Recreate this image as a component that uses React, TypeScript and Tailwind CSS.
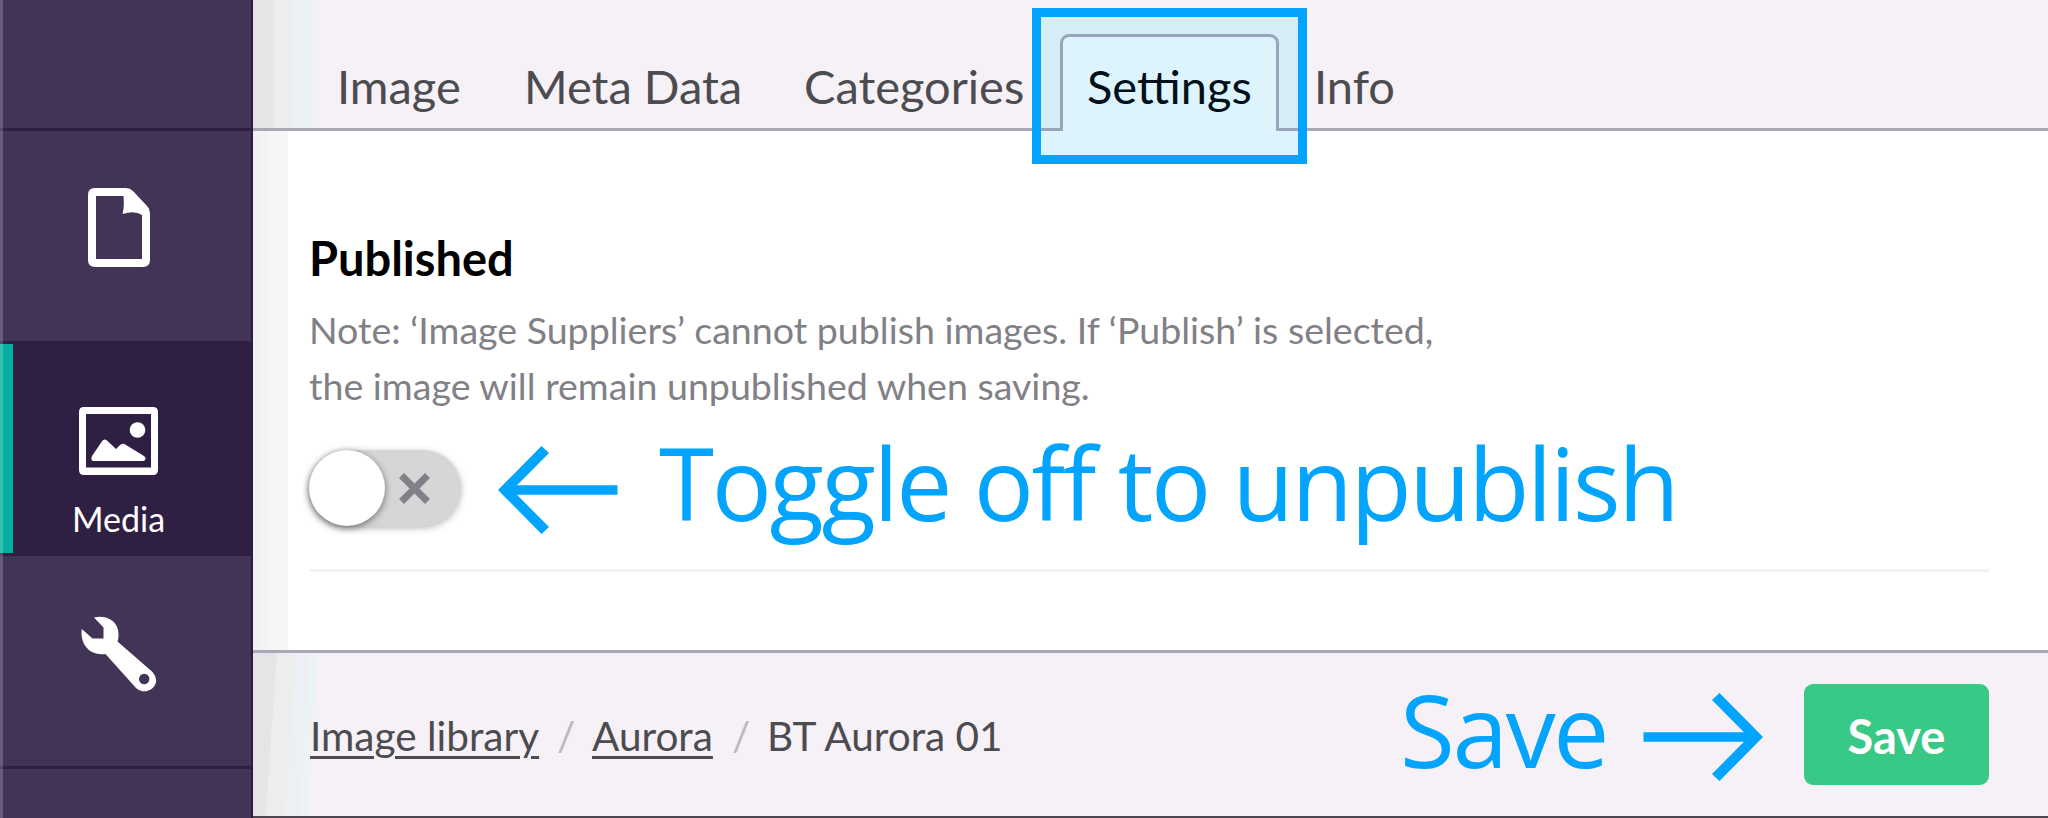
import React from "react";

function FileIcon() {
  return (
    <svg width="62" height="79" viewBox="0 0 62 79" fill="#fff" fillRule="evenodd">
      <path d="M7 0H38Q42 0 45 3L59 18Q62 21 62 25V72Q62 79 55 79H7Q0 79 0 72V7Q0 0 7 0ZM8 8V71H54V27Q47 22 34.500 26Q36.500 20 35.500 8Z" />
    </svg>
  );
}

function PictureIcon() {
  return (
    <svg width="79" height="68" viewBox="0 0 79 68" fill="#fff" fillRule="evenodd">
      <path d="M5 0H74Q79 0 79 5V63Q79 68 74 68H5Q0 68 0 63V5Q0 0 5 0ZM7 7V60.500H72V7Z" />
      <circle cx="58.500" cy="23" r="7.800" />
      <path d="M15 54Q11 54 13 49L22.500 35Q25.500 30.500 29 34.500L37 42L40.500 38.500Q43.500 35.500 47 38L65 49Q67 50.500 66.500 52Q66 54 64 54Z" />
    </svg>
  );
}

function WrenchIcon() {
  return (
    <svg width="76" height="76" viewBox="0 0 76 76" fill="#fff" fillRule="evenodd">
      <path d="M13 1.500C24 -1.500 38 4 37.500 19Q37.500 23 36.500 25.500L71.500 56Q76 61 75 66C73.500 74 63 79 55 72L24.500 38C9 40.500 -1.500 28 0.800 13L11.500 22.500H22.500V11.500ZM63.200 57.800A5.200 5.200 0 1 0 63.200 68.200A5.200 5.200 0 1 0 63.200 57.800Z" />
    </svg>
  );
}

function Arrow({ flip = false }: { flip?: boolean }) {
  return (
    <svg
      width="120"
      height="88"
      viewBox="0 0 120 88"
      fill="#02a4fd"
      className={flip ? "-scale-x-100" : ""}
    >
      <path d="M0 44L43.500 0L51 7L19 39.200H119.500V48.800H19L51 81L43.500 88Z" />
    </svg>
  );
}

function Sidebar() {
  return (
    <nav className="relative flex w-[253px] shrink-0 flex-col border-r-2 border-[#2c1b42] bg-[#413457]">
      <div className="h-[131px] border-b-[3px] border-[#2f1f43]" />
      <div className="flex h-[210px] justify-center pt-[57px] pr-[13px]">
        <FileIcon />
      </div>
      <div className="flex h-[215px] border-y-[3px] border-[#2f1f43] bg-[#2f1f43]">
        <div className="w-[13px] bg-[#06afa1]" />
        <div className="flex w-[211px] flex-col items-center pt-[63px]">
          <PictureIcon />
          <span className="mt-[24px] text-[34px] leading-[40px] text-white">Media</span>
        </div>
      </div>
      <div className="flex h-[213px] justify-center border-b-[3px] border-[#2f1f43] pt-[60px] pr-[13px]">
        <WrenchIcon />
      </div>
      <div className="absolute inset-y-0 left-0 w-[3px] bg-white/20" />
    </nav>
  );
}

function Tabs() {
  return (
    <header className="flex h-[131px] shrink-0 border-b-[3px] border-[#aaa7b7] bg-[#f5f1f6] bg-[linear-gradient(90deg,#e5e5e8_0_21px,#ededed_21px_39px,#eceff3_39px_52px,#ecf3f3_52px_60px,#f5f1f6_60px)] pl-[84px] text-[47px] leading-[58px] whitespace-nowrap text-[#4c4b50]">
      <span className="mt-[57px] w-[187px]">Image</span>
      <span className="mt-[57px] w-[280px]">Meta Data</span>
      <span className="mt-[57px] w-[256px]">Categories</span>
      <div className="relative mt-[34px] h-[97px] w-[219px] shrink-0">
        <div className="absolute -top-[26px] -left-[28px] h-[156px] w-[275px] border-[9px] border-[#02a4fd] bg-[linear-gradient(#d7edf5_0_111px,#98a4ba_111px_114px,#ddf4fd_114px)] bg-origin-padding" />
        <div className="relative h-[97px] rounded-t-[9px] border-x-[3px] border-t-[3px] border-[#98a4ba] bg-[#ddf4fd] pt-[20px] pl-[24px] text-[#01101a]">
          Settings
        </div>
      </div>
      <span className="mt-[57px] ml-[35px]">Info</span>
    </header>
  );
}

function Toggle() {
  return (
    <button className="flex h-[76px] w-[152px] items-center rounded-full bg-[#d6d6d7] shadow-[0_2px_7px_rgba(0,0,0,0.28)]">
      <span className="h-[76px] w-[76px] rounded-full bg-white shadow-[0_2px_7px_rgba(0,0,0,0.5)]" />
      <svg className="ml-[14px]" width="31" height="31" viewBox="0 0 31 31" stroke="#828086" strokeWidth="7">
        <path d="M2.500 2.500L28.500 28.500M28.500 2.500L2.500 28.500" />
      </svg>
    </button>
  );
}

export default function App() {
  return (
    <div className="flex h-[818px] w-[2048px] overflow-hidden font-['Lato',sans-serif]">
      <Sidebar />
      <div className="flex grow flex-col">
        <Tabs />
        <main className="h-[519px] bg-[linear-gradient(90deg,#f0f1f3_0_7px,#f5f1f5_7px_14px,#f6f6f6_14px_29px,#f6f7fb_29px_35px,#fff_35px)] pr-[59px] pl-[57px]">
          <h2 className="-ml-px pt-[98px] text-[47px] leading-[58px] font-bold text-black">Published</h2>
          <p className="mt-[15px] -ml-px text-[37.55px] leading-[56px] whitespace-nowrap text-[#818086]">
            Note: ‘Image Suppliers’ cannot publish images. If ‘Publish’ is selected,
            <br />
            the image will remain unpublished when saving.
          </p>
          <div className="mt-[35px] -ml-px flex h-[78px] items-center">
            <Toggle />
            <div className="mt-[3px] ml-[37px] h-[88px]">
              <Arrow />
            </div>
            <span className="mb-[12px] ml-[41px] font-['Open_Sans',sans-serif] text-[100px] leading-[78px] tracking-[-2.35px] whitespace-nowrap text-[#02a4fd]">
              Toggle off to unpublish
            </span>
          </div>
          <div className="mt-[42px] h-[3px] bg-[#f2f2f4]" />
        </main>
        <footer className="flex h-[168px] items-center border-t-[3px] border-b-2 border-t-[#aaa7b7] border-b-[#4c4753] bg-[linear-gradient(94deg,#e5e5e8_0_24px,#ededed_24px_43px,#eceff3_43px_57px,#ecf3f3_57px_65px,#f5f1f6_65px)] pr-[59px] pl-[57px]">
          <div className="mt-[2px] flex text-[40.5px] leading-[48px] whitespace-nowrap text-[#4c4b50]">
            <a className="w-[247px] underline decoration-[3px] underline-offset-[5px]">Image library</a>
            <span className="w-[35px] text-[#bcbac0]">/</span>
            <a className="w-[140px] underline decoration-[3px] underline-offset-[5px]">Aurora</a>
            <span className="w-[35px] text-[#bcbac0]">/</span>
            <span>BT Aurora 01</span>
          </div>
          <div className="ml-auto flex items-center">
            <span className="mb-[11px] font-['Open_Sans',sans-serif] text-[100px] leading-[78px] tracking-[-2.4px] text-[#02a4fd]">
              Save
            </span>
            <div className="mt-[4px] ml-[36px]">
              <Arrow flip />
            </div>
            <button className="ml-[41px] h-[101px] w-[185px] rounded-[9px] bg-[#38c986] pt-[3px] text-[47px] font-bold text-white">
              Save
            </button>
          </div>
        </footer>
      </div>
    </div>
  );
}
